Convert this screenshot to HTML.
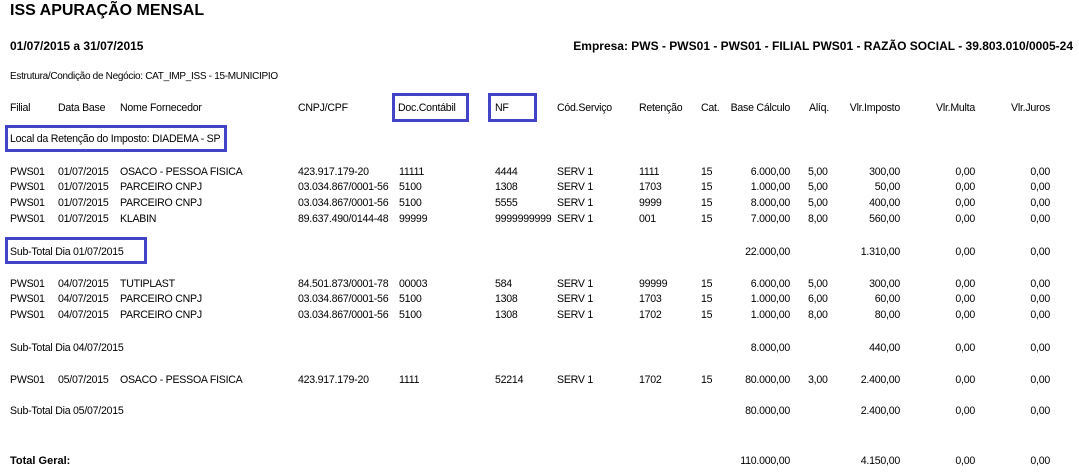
<!DOCTYPE html>
<html><head><meta charset="utf-8"><style>
body{margin:0;width:1079px;height:474px;background:#fff;overflow:hidden;font-family:"Liberation Sans",Tahoma,sans-serif;font-size:10.6px;letter-spacing:-0.25px;color:#000;position:relative}
.t{position:absolute;white-space:nowrap;line-height:14px}
.b{font-weight:bold;letter-spacing:0}
.box{position:absolute;border:3px solid #4343c8;box-sizing:border-box}
</style></head><body>
<div class="t b" style="left:10px;top:1px;font-size:16px;line-height:20px">ISS APURAÇÃO MENSAL</div>
<div class="t b" style="left:10px;top:39px;font-size:12px">01/07/2015 a 31/07/2015</div>
<div class="t b" style="right:6px;top:39px;font-size:12px">Empresa: PWS - PWS01 - PWS01 - FILIAL PWS01 - RAZÃO SOCIAL - 39.803.010/0005-24</div>
<div class="t" style="left:10px;top:70px;font-size:10px;letter-spacing:-0.3px">Estrutura/Condição de Negócio: CAT_IMP_ISS - 15-MUNICIPIO</div>

<div class="t" style="left:10px;top:101px">Filial</div>
<div class="t" style="left:58px;top:101px">Data Base</div>
<div class="t" style="left:120px;top:101px">Nome Fornecedor</div>
<div class="t" style="left:298px;top:101px">CNPJ/CPF</div>
<div class="t" style="left:398px;top:101px">Doc.Contábil</div>
<div class="t" style="left:495px;top:101px">NF</div>
<div class="t" style="left:557px;top:101px">Cód.Serviço</div>
<div class="t" style="left:639px;top:101px">Retenção</div>
<div class="t" style="left:701px;top:101px">Cat.</div>
<div class="t" style="right:289px;top:101px">Base Cálculo</div>
<div class="t" style="left:809px;top:101px">Alíq.</div>
<div class="t" style="right:179px;top:101px">Vlr.Imposto</div>
<div class="t" style="right:104px;top:101px">Vlr.Multa</div>
<div class="t" style="right:29px;top:101px">Vlr.Juros</div>
<div class="box" style="left:392px;top:93px;width:77px;height:29px"></div>
<div class="box" style="left:488px;top:93px;width:49px;height:29px"></div>

<div class="t" style="left:10px;top:132px">Local da Retenção do Imposto: DIADEMA - SP</div>
<div class="box" style="left:5px;top:125px;width:222px;height:27px"></div>

<div class="t" style="left:10px;top:245px">Sub-Total Dia 01/07/2015</div>
<div class="box" style="left:5px;top:237px;width:142px;height:27px"></div>
<div class="t" style="right:289px;top:245px">22.000,00</div>
<div class="t" style="right:179px;top:245px">1.310,00</div>
<div class="t" style="right:104px;top:245px">0,00</div>
<div class="t" style="right:29px;top:245px">0,00</div>

<div class="t" style="left:10px;top:341px">Sub-Total Dia 04/07/2015</div>
<div class="t" style="right:289px;top:341px">8.000,00</div>
<div class="t" style="right:179px;top:341px">440,00</div>
<div class="t" style="right:104px;top:341px">0,00</div>
<div class="t" style="right:29px;top:341px">0,00</div>

<div class="t" style="left:10px;top:404px">Sub-Total Dia 05/07/2015</div>
<div class="t" style="right:289px;top:404px">80.000,00</div>
<div class="t" style="right:179px;top:404px">2.400,00</div>
<div class="t" style="right:104px;top:404px">0,00</div>
<div class="t" style="right:29px;top:404px">0,00</div>

<div class="t b" style="left:10px;top:454px;font-size:11px">Total Geral:</div>
<div class="t" style="right:289px;top:454px">110.000,00</div>
<div class="t" style="right:179px;top:454px">4.150,00</div>
<div class="t" style="right:104px;top:454px">0,00</div>
<div class="t" style="right:29px;top:454px">0,00</div>

<div class="t" style="left:10px;top:165px">PWS01</div><div class="t" style="left:58px;top:165px">01/07/2015</div><div class="t" style="left:120px;top:165px">OSACO - PESSOA FISICA</div><div class="t" style="left:298px;top:165px">423.917.179-20</div><div class="t" style="left:399px;top:165px">11111</div><div class="t" style="left:495px;top:165px">4444</div><div class="t" style="left:557px;top:165px">SERV 1</div><div class="t" style="left:639px;top:165px">1111</div><div class="t" style="left:701px;top:165px">15</div><div class="t" style="right:289px;top:165px">6.000,00</div><div class="t" style="left:808px;top:165px">5,00</div><div class="t" style="right:179px;top:165px">300,00</div><div class="t" style="right:104px;top:165px">0,00</div><div class="t" style="right:29px;top:165px">0,00</div>
<div class="t" style="left:10px;top:180px">PWS01</div><div class="t" style="left:58px;top:180px">01/07/2015</div><div class="t" style="left:120px;top:180px">PARCEIRO CNPJ</div><div class="t" style="left:298px;top:180px">03.034.867/0001-56</div><div class="t" style="left:399px;top:180px">5100</div><div class="t" style="left:495px;top:180px">1308</div><div class="t" style="left:557px;top:180px">SERV 1</div><div class="t" style="left:639px;top:180px">1703</div><div class="t" style="left:701px;top:180px">15</div><div class="t" style="right:289px;top:180px">1.000,00</div><div class="t" style="left:808px;top:180px">5,00</div><div class="t" style="right:179px;top:180px">50,00</div><div class="t" style="right:104px;top:180px">0,00</div><div class="t" style="right:29px;top:180px">0,00</div>
<div class="t" style="left:10px;top:196px">PWS01</div><div class="t" style="left:58px;top:196px">01/07/2015</div><div class="t" style="left:120px;top:196px">PARCEIRO CNPJ</div><div class="t" style="left:298px;top:196px">03.034.867/0001-56</div><div class="t" style="left:399px;top:196px">5100</div><div class="t" style="left:495px;top:196px">5555</div><div class="t" style="left:557px;top:196px">SERV 1</div><div class="t" style="left:639px;top:196px">9999</div><div class="t" style="left:701px;top:196px">15</div><div class="t" style="right:289px;top:196px">8.000,00</div><div class="t" style="left:808px;top:196px">5,00</div><div class="t" style="right:179px;top:196px">400,00</div><div class="t" style="right:104px;top:196px">0,00</div><div class="t" style="right:29px;top:196px">0,00</div>
<div class="t" style="left:10px;top:212px">PWS01</div><div class="t" style="left:58px;top:212px">01/07/2015</div><div class="t" style="left:120px;top:212px">KLABIN</div><div class="t" style="left:298px;top:212px">89.637.490/0144-48</div><div class="t" style="left:399px;top:212px">99999</div><div class="t" style="left:495px;top:212px">9999999999</div><div class="t" style="left:557px;top:212px">SERV 1</div><div class="t" style="left:639px;top:212px">001</div><div class="t" style="left:701px;top:212px">15</div><div class="t" style="right:289px;top:212px">7.000,00</div><div class="t" style="left:808px;top:212px">8,00</div><div class="t" style="right:179px;top:212px">560,00</div><div class="t" style="right:104px;top:212px">0,00</div><div class="t" style="right:29px;top:212px">0,00</div>

<div class="t" style="left:10px;top:277px">PWS01</div><div class="t" style="left:58px;top:277px">04/07/2015</div><div class="t" style="left:120px;top:277px">TUTIPLAST</div><div class="t" style="left:298px;top:277px">84.501.873/0001-78</div><div class="t" style="left:399px;top:277px">00003</div><div class="t" style="left:495px;top:277px">584</div><div class="t" style="left:557px;top:277px">SERV 1</div><div class="t" style="left:639px;top:277px">99999</div><div class="t" style="left:701px;top:277px">15</div><div class="t" style="right:289px;top:277px">6.000,00</div><div class="t" style="left:808px;top:277px">5,00</div><div class="t" style="right:179px;top:277px">300,00</div><div class="t" style="right:104px;top:277px">0,00</div><div class="t" style="right:29px;top:277px">0,00</div>
<div class="t" style="left:10px;top:292px">PWS01</div><div class="t" style="left:58px;top:292px">04/07/2015</div><div class="t" style="left:120px;top:292px">PARCEIRO CNPJ</div><div class="t" style="left:298px;top:292px">03.034.867/0001-56</div><div class="t" style="left:399px;top:292px">5100</div><div class="t" style="left:495px;top:292px">1308</div><div class="t" style="left:557px;top:292px">SERV 1</div><div class="t" style="left:639px;top:292px">1703</div><div class="t" style="left:701px;top:292px">15</div><div class="t" style="right:289px;top:292px">1.000,00</div><div class="t" style="left:808px;top:292px">6,00</div><div class="t" style="right:179px;top:292px">60,00</div><div class="t" style="right:104px;top:292px">0,00</div><div class="t" style="right:29px;top:292px">0,00</div>
<div class="t" style="left:10px;top:308px">PWS01</div><div class="t" style="left:58px;top:308px">04/07/2015</div><div class="t" style="left:120px;top:308px">PARCEIRO CNPJ</div><div class="t" style="left:298px;top:308px">03.034.867/0001-56</div><div class="t" style="left:399px;top:308px">5100</div><div class="t" style="left:495px;top:308px">1308</div><div class="t" style="left:557px;top:308px">SERV 1</div><div class="t" style="left:639px;top:308px">1702</div><div class="t" style="left:701px;top:308px">15</div><div class="t" style="right:289px;top:308px">1.000,00</div><div class="t" style="left:808px;top:308px">8,00</div><div class="t" style="right:179px;top:308px">80,00</div><div class="t" style="right:104px;top:308px">0,00</div><div class="t" style="right:29px;top:308px">0,00</div>

<div class="t" style="left:10px;top:373px">PWS01</div><div class="t" style="left:58px;top:373px">05/07/2015</div><div class="t" style="left:120px;top:373px">OSACO - PESSOA FISICA</div><div class="t" style="left:298px;top:373px">423.917.179-20</div><div class="t" style="left:399px;top:373px">1111</div><div class="t" style="left:495px;top:373px">52214</div><div class="t" style="left:557px;top:373px">SERV 1</div><div class="t" style="left:639px;top:373px">1702</div><div class="t" style="left:701px;top:373px">15</div><div class="t" style="right:289px;top:373px">80.000,00</div><div class="t" style="left:808px;top:373px">3,00</div><div class="t" style="right:179px;top:373px">2.400,00</div><div class="t" style="right:104px;top:373px">0,00</div><div class="t" style="right:29px;top:373px">0,00</div>
</body></html>
